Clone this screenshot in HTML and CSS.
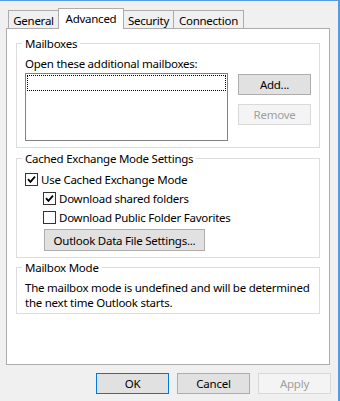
FILE: index.html
```html
<!DOCTYPE html>
<html lang="en">
<head>
    <meta charset="UTF-8">
    <title>Account Settings - Advanced</title>
    <link rel="stylesheet" href="styles.css">
</head>
<body>
    <div class="window">
        <!-- Tabs -->
        <div class="tabs">
            <div class="tab tab-general">General</div>
            <div class="tab tab-advanced active">Advanced</div>
            <div class="tab tab-security">Security</div>
            <div class="tab tab-connection">Connection</div>
        </div>

        <div class="panel">
            <fieldset class="group group-mailboxes">
                <legend>Mailboxes</legend>
                <div class="label">Open these additional mailboxes:</div>
                <div class="mailboxes">
                    <div class="listbox">
                        <div class="focus-row"></div>
                    </div>
                    <div class="side-buttons">
                        <button class="btn">Add...</button>
                        <button class="btn" disabled>Remove</button>
                    </div>
                </div>
            </fieldset>

            <fieldset class="group group-cached">
                <legend>Cached Exchange Mode Settings</legend>
                <div class="check">
                    <span class="box checked"><svg viewBox="0 0 11 11"><path d="M2 5.2 L4.4 7.8 L9 2.6"/></svg></span>
                    <span>Use Cached Exchange Mode</span>
                </div>
                <div class="check sub">
                    <span class="box checked"><svg viewBox="0 0 11 11"><path d="M2 5.2 L4.4 7.8 L9 2.6"/></svg></span>
                    <span>Download shared folders</span>
                </div>
                <div class="check sub">
                    <span class="box"></span>
                    <span>Download Public Folder Favorites</span>
                </div>
                <button class="btn btn-wide">Outlook Data File Settings...</button>
            </fieldset>

            <fieldset class="group group-mode">
                <legend>Mailbox Mode</legend>
                <p class="mode-text">The mailbox mode is undefined and will be determined<br>the next time Outlook starts.</p>
            </fieldset>
        </div>

        <!-- Кнопки диалога -->
        <div class="footer">
            <button class="btn default">OK</button>
            <button class="btn">Cancel</button>
            <button class="btn" disabled>Apply</button>
        </div>
    </div>
</body>
</html>
```

FILE: styles.css
```css
body {
    margin: 0;
    background: #f0f0f0;
    font-family: "Segoe UI", "Noto Sans", sans-serif;
    font-size: 11.5px;
    letter-spacing: -0.25px;
    color: #000;
}
.window {
    box-sizing: border-box;
    width: 340px;
    height: 401px;
    border-top: 1px solid #5a9be0;
    border-right: 2px solid #5a9be0;
    background: #f0f0f0;
    padding: 7px 7px 0 6px;
    display: flex;
    flex-direction: column;
}

/* Вкладки */
.tabs {
    display: flex;
    align-items: flex-end;
    padding-left: 2px;
}
.tab {
    box-sizing: border-box;
    height: 18px;
    padding-top: 2px;
    line-height: 15px;
    text-align: center;
    border: 1px solid #acacac;
    border-bottom: 0;
    background: #f0f0f0;
    margin-left: -1px;
}
.tab:first-child { margin-left: 0; }
.tab-general { width: 51px; }
.tab-advanced { width: 66px; }
.tab-security { width: 51px; }
.tab-connection { width: 71px; }
.tab.active {
    height: 21px;
    margin-bottom: -1px;
    background: #fff;
    position: relative;
    z-index: 1;
}

.panel {
    flex: 1;
    background: #fff;
    border: 1px solid #acacac;
    margin-right: 1px;
    padding: 7px 9px 0 9px;
}

/* Группы */
.group {
    margin: 0;
    min-width: 0;
    border: 1px solid #dcdcdc;
    padding: 5px 8px 6px 8px;
}
.group legend {
    padding: 0 3px;
    margin-left: -3px;
    line-height: 15px;
}
.group-cached {
    margin-top: 3px;
    padding-top: 4px;
}
.group-mode {
    margin-top: 2px;
    padding-top: 5px;
    padding-bottom: 3px;
}
.label {
    line-height: 15px;
}
.mailboxes {
    display: flex;
    gap: 10px;
    margin-top: 2px;
}
.listbox {
    flex: 1;
    box-sizing: border-box;
    height: 68px;
    border: 1px solid #828282;
    background: #fff;
    padding: 1px;
}
.focus-row {
    box-sizing: border-box;
    height: 16px;
    border: 1px dotted #000;
}
.side-buttons {
    display: flex;
    flex-direction: column;
    gap: 9px;
    padding-top: 1px;
}

/* Кнопки */
.btn {
    box-sizing: border-box;
    width: 73px;
    height: 21px;
    padding: 0;
    font-family: inherit;
    font-size: 11.5px;
    letter-spacing: -0.25px;
    line-height: 19px;
    color: #000;
    background: #e1e1e1;
    border: 1px solid #adadad;
    text-align: center;
}
.btn:disabled {
    color: #a0a0a0;
    background: #f4f4f4;
    border-color: #d9d9d9;
}
.btn.default {
    border-color: #0078d7;
}
.btn-wide {
    width: 161px;
    height: 22px;
    margin: 2px 0 0 19px;
    display: block;
}

/* Флажки */
.check {
    display: flex;
    align-items: center;
    gap: 3px;
    height: 19px;
    line-height: 15px;
}
.check.sub {
    padding-left: 18px;
}
.box {
    box-sizing: border-box;
    width: 13px;
    height: 13px;
    border: 1px solid #333;
    background: #fff;
    display: flex;
}
.box svg {
    width: 11px;
    height: 11px;
}
.box path {
    fill: none;
    stroke: #000;
    stroke-width: 1.8;
}

.mode-text {
    margin: 0;
    line-height: 15px;
}

.footer {
    display: flex;
    justify-content: flex-end;
    gap: 8px;
    padding: 8px 0 7px 0;
}
```
